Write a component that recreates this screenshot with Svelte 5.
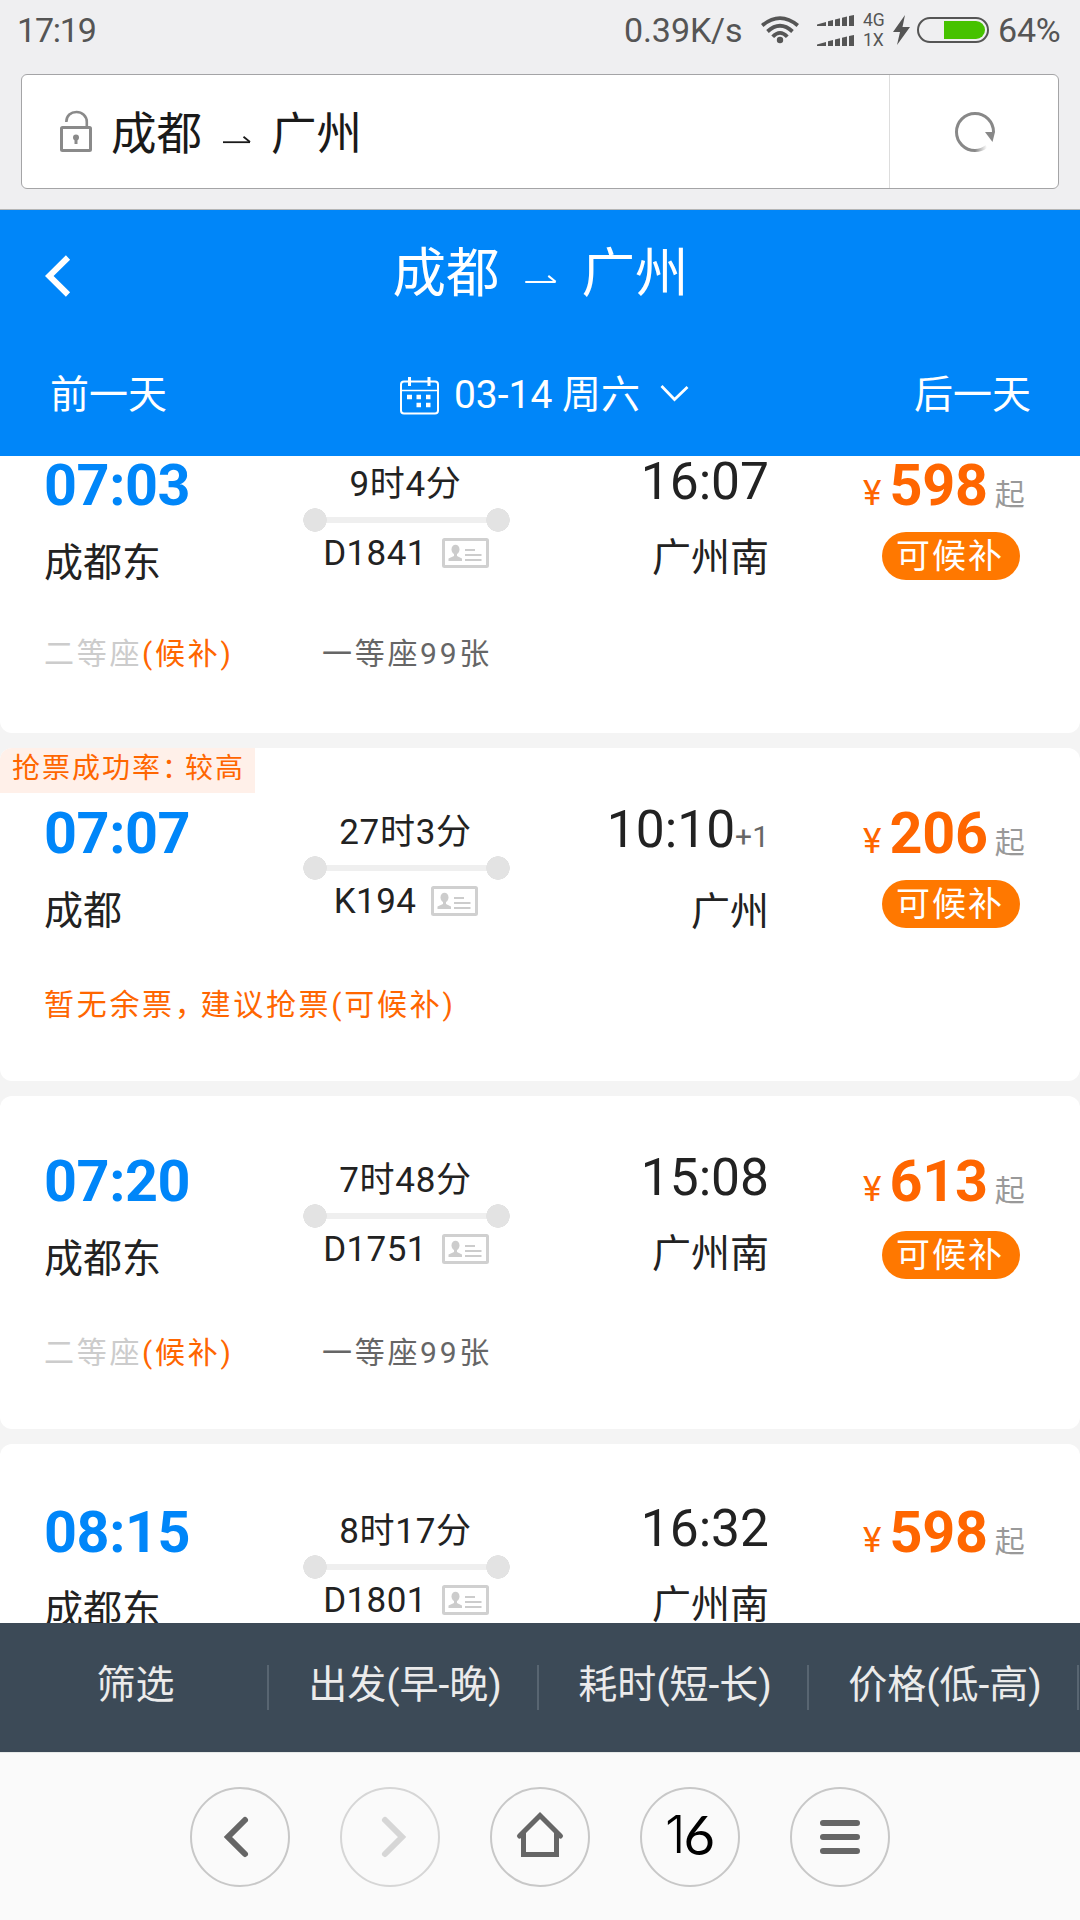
<script lang="ts">
  /**
   * Train ticket list for one day, inside the mobile browser chrome.
   */

  interface Train {
    depart: string
    from: string
    duration: string
    no: string
    arrive: string
    plusDay?: number
    to: string
    price: number
    waitlist: boolean
    rate?: string
    note?: boolean
    seats?: boolean
  }

  const trains: Train[] = [
    { depart: '07:03', from: '成都东', duration: '9时4分', no: 'D1841', arrive: '16:07', to: '广州南', price: 598, waitlist: true, seats: true },
    { depart: '07:07', from: '成都', duration: '27时3分', no: 'K194', arrive: '10:10', plusDay: 1, to: '广州', price: 206, waitlist: true, rate: '较高', note: true },
    { depart: '07:20', from: '成都东', duration: '7时48分', no: 'D1751', arrive: '15:08', to: '广州南', price: 613, waitlist: true, seats: true },
    { depart: '08:15', from: '成都东', duration: '8时17分', no: 'D1801', arrive: '16:32', to: '广州南', price: 598, waitlist: false },
  ]

  const filters = ['筛选', '出发(早-晚)', '耗时(短-长)', '价格(低-高)']
</script>

{#snippet harpoon()}
  <svg class="harpoon" viewBox="0 0 28 8" fill="none" stroke="currentColor" stroke-width="1.8">
    <path d="M0 6.2H27" />
    <path d="M20.5 0.8L27 6" />
  </svg>
{/snippet}

{#snippet signal()}
  <svg width="37" height="11" viewBox="0 0 37 11" fill="#555">
    <path d="M0 11V9.6L9 7V11ZM11 11V6.3L16 5V11ZM18 11V4.6L23 3.2V11ZM25 11V2.8L30 1.5V11ZM32 11V1L37 0V11Z" />
  </svg>
{/snippet}

<div class="screen">
  <div class="status">
    <span class="clock">17:19</span>
    <span class="speed">0.39K/s</span>
    <svg class="wifi" width="38" height="28" viewBox="0 0 38 28" fill="none" stroke="#555" stroke-width="3.8">
      <path d="M1.2 9.5Q19 -5.2 36.8 9.5" />
      <path d="M6.5 15.5Q19 4 31.5 15.5" />
      <path d="M11.7 20.8Q19 13 26.3 20.8" />
      <circle cx="19" cy="24" r="3.2" fill="#555" stroke="none" />
    </svg>
    <span class="signals">
      {@render signal()}
      {@render signal()}
    </span>
    <span class="modes"><span>4G</span><span>1X</span></span>
    <svg class="bolt" width="17" height="30" viewBox="0 0 17 30" fill="#555">
      <path d="M12 0L0 17H7L4 30L17 12H9.5Z" />
    </svg>
    <span class="battery"><i></i></span>
    <span class="percent">64%</span>
  </div>

  <div class="address">
    <div class="field">
      <svg width="32" height="42" viewBox="0 0 32 42" fill="none" stroke="#8a8a8a" stroke-width="3">
        <rect x="1.5" y="17.5" width="29" height="23" rx="1" />
        <path d="M6.3 12C6.3 5.5 11 2 16.5 2S26.8 6 26.8 12V17" stroke-width="2.6" />
        <circle cx="16" cy="27.5" r="3" fill="#8a8a8a" stroke="none" />
        <path d="M16 28V34" />
      </svg>
      <span class="place">成都{@render harpoon()}广州</span>
    </div>
    <div class="reload">
      <svg width="42" height="42" viewBox="0 0 42 42" fill="none">
        <defs>
          <linearGradient id="fade" x1="21" y1="0" x2="33" y2="0" gradientUnits="userSpaceOnUse">
            <stop offset="0" stop-color="#888" />
            <stop offset="1" stop-color="#888" stop-opacity="0" />
          </linearGradient>
        </defs>
        <path d="M39.5 21A18.5 18.5 0 1 0 21 39.5" stroke="#888" stroke-width="3" />
        <path d="M21 39.5A18.5 18.5 0 0 0 32.5 35.5" stroke="url(#fade)" stroke-width="3" />
        <path d="M31 21H41L38.5 31Z" fill="#888" />
      </svg>
    </div>
  </div>

  <header>
    <div class="title">
      <svg width="26" height="42" viewBox="0 0 26 42" fill="none" stroke="#fff" stroke-width="6">
        <path d="M23 2.5L4.2 21L23 39.5" />
      </svg>
      <h1>成都{@render harpoon()}广州</h1>
    </div>
    <div class="days">
      <span>前一天</span>
      <span class="date">
        <svg class="calendar" width="39" height="38" viewBox="0 0 39 38" fill="none" stroke="#fff" stroke-width="2">
          <rect x="1" y="4.5" width="37" height="32" rx="3" />
          <path d="M1 13.5H38" stroke-width="1.5" />
          <path d="M9.5 0V9M29 0V9" stroke-width="3" />
          <path d="M7 20H12M16.5 20H21M26 20H30.5M16.5 28H21M26 28H30.5" stroke-width="4.6" />
        </svg>
        <span>03-14 周六</span>
        <svg class="down" width="29" height="19" viewBox="0 0 29 19" fill="none" stroke="#fff" stroke-width="2.8">
          <path d="M1.5 2L14.5 15.5L27.5 3" />
        </svg>
      </span>
      <span>后一天</span>
    </div>
  </header>

  <main>
    <div class="list">
      {#each trains as train}
        <section class="card">
          {#if train.rate}
            <span class="rate">抢票成功率<span class="colon">：</span>{train.rate}</span>
          {/if}
          <div class="info">
            <div class="from">
              <strong>{train.depart}</strong>
              <span class="station">{train.from}</span>
            </div>
            <div class="trip">
              <span class="duration">{train.duration}</span>
              <span class="track"></span>
              <span class="no">
                {train.no}
                <svg width="47" height="30" viewBox="0 0 47 30" fill="#ccc">
                  <rect x="1.5" y="1.5" width="44" height="27" rx="1" fill="none" stroke="#d0d0d0" stroke-width="3" />
                  <ellipse cx="13.5" cy="11.5" rx="4" ry="4.8" />
                  <path d="M12 14H15V18L20 20.5V23H6.5V20.5L12 18Z" />
                  <path d="M23 11H33V13H23ZM23 16H39.5V18H23ZM23 21H39.5V23H23Z" />
                </svg>
              </span>
            </div>
            <div class="to" class:overnight={train.plusDay}>
              <span class="time">{train.arrive}{#if train.plusDay}<sub>+{train.plusDay}</sub>{/if}</span>
              <span class="station">{train.to}</span>
            </div>
            <div class="fare">
              <span class="price"><i>¥</i><strong>{train.price}</strong><em>起</em></span>
              {#if train.waitlist}
                <span class="badge">可候补</span>
              {/if}
            </div>
          </div>
          <div class="seats">
            {#if train.note}
              <span class="wait">暂无余票<span class="comma">，</span>建议抢票(可候补)</span>
            {:else if train.seats}
              <span class="seat"><span class="gone">二等座</span><span class="wait">(候补)</span></span>
              <span>一等座99张</span>
            {/if}
          </div>
        </section>
      {/each}
    </div>
  </main>

  <div class="filters">
    {#each filters as filter}
      <span>{filter}</span>
    {/each}
  </div>

  <nav>
    <span class="round">
      <svg width="60" height="60" viewBox="-30 -30 60 60"><path d="M5 -17L-12 0L5 17" /></svg>
    </span>
    <span class="round off">
      <svg width="60" height="60" viewBox="-30 -30 60 60"><path d="M-5 -17L12 0L-5 17" /></svg>
    </span>
    <span class="round">
      <svg width="60" height="60" viewBox="-30 -30 60 60">
        <path class="house" d="M-20.5 -1L0 -21.5L20.5 -1M-16.5 -4V17.5H16.5V-4" />
      </svg>
    </span>
    <span class="round tabs"><b>1</b>6</span>
    <span class="round">
      <svg width="60" height="60" viewBox="-30 -30 60 60"><path d="M-17 -14H17M-17 0H17M-17 14H17" /></svg>
    </span>
  </nav>
</div>

<style>
  :global(body) { margin: 0; background: #fafafa; }
  .screen {
    width: 1080px; height: 1920px; overflow: hidden;
    display: flex; flex-direction: column;
    font-family: Roboto, 'Noto Sans CJK SC', sans-serif;
    color: #222; background: #efeff1;
  }
  svg { display: block; flex: none; }
  strong { font-weight: 700; }
  i, em { font-style: normal; }

  .status {
    height: 60px; flex: none; box-sizing: border-box;
    padding: 0 16px 0 17px;
    display: flex; align-items: center;
    font-size: 34px; line-height: 60px; color: #555;
  }
  .clock { flex: 1; letter-spacing: -1.2px; }
  .speed { width: 120px; margin-right: 17px; white-space: nowrap; letter-spacing: -0.1px; }
  .signals { margin-left: 18px; display: flex; flex-direction: column; gap: 9px; }
  .modes {
    width: 24px; margin: 0 6px 0 9px;
    display: flex; flex-direction: column;
    font-size: 17.5px; line-height: 20px;
  }
  .battery {
    width: 72px; height: 26px; box-sizing: border-box; margin: 0 9px 0 7px;
    border: 2px solid #555; border-radius: 13px; padding: 2px;
    display: flex; justify-content: flex-end;
  }
  .battery i { width: 41px; background: #46c200; border-radius: 0 9px 9px 0; }
  .percent { width: 66px; letter-spacing: -0.2px; }

  .address {
    height: 115px; flex: none; box-sizing: border-box;
    margin: 14px 21px 0; border: 1px solid #a4a4a6; border-radius: 6px;
    display: flex; background: #fff;
  }
  .field { flex: 1; padding: 0 0 1px 38px; display: flex; align-items: center; gap: 19px; }
  .place {
    display: flex; align-items: center; padding-top: 7px;
    font-size: 45.5px; line-height: 50px; color: #1a1a1a;
  }
  .harpoon { width: 28px; height: 8px; margin: 10px 20px 0 21px; }
  .reload {
    width: 168px; border-left: 1px solid #ddd;
    display: flex; align-items: center; justify-content: center;
  }
  .reload svg { margin-left: 1px; }

  header {
    height: 247px; flex: none; box-sizing: border-box; margin-top: 20px;
    border-top: 1px solid #b5b5b5; background: #0086f9; color: #fff;
  }
  .title { height: 126px; display: flex; align-items: center; padding: 6px 0 0 45px; box-sizing: border-box; }
  h1 {
    flex: 1; margin: 0; padding: 0 70px 5px 0;
    display: flex; align-items: center; justify-content: center;
    font-size: 53.5px; font-weight: 400; line-height: 60px;
  }
  h1 .harpoon { width: 32px; height: 9px; margin: 12px 25px 0; }
  .days {
    padding: 33px 49px 0 50px; display: flex; align-items: center; justify-content: space-between;
    font-size: 39px; line-height: 52px;
  }
  .date { display: flex; align-items: center; gap: 15px; margin-left: 8px; }
  .calendar { margin-top: 2px; }
  .down { margin: 0 0 3px 5px; }

  main { height: 1167px; flex: none; overflow: hidden; background: #f4f4f4; }
  .list { margin-top: -56px; display: flex; flex-direction: column; gap: 15px; }
  .card {
    height: 333px; box-sizing: border-box; padding-top: 60px; overflow: hidden;
    position: relative; border-radius: 12px; background: #fff;
  }
  .card:last-child { padding-top: 63px; }
  .rate {
    position: absolute; top: 0; left: 0;
    width: 255px; height: 45px; box-sizing: border-box; padding-left: 12px;
    font-size: 28px; line-height: 42px; letter-spacing: 2px; white-space: nowrap;
    color: #f60; background: #fff0e9;
  }
  .colon { letter-spacing: -5px; }
  .comma { letter-spacing: -4.3px; }
  .info { height: 130px; display: flex; }
  .info > div { display: flex; flex-direction: column; }
  .from { width: 303px; padding-left: 44px; box-sizing: border-box; }
  .from strong { font-size: 57.5px; line-height: 51px; letter-spacing: -0.4px; color: #0086f9; }
  .from .station { margin-top: 26px; }
  .station { font-size: 39px; line-height: 52px; }
  .trip { width: 207px; align-items: center; }
  .duration { font-size: 35px; line-height: 50px; height: 48px; letter-spacing: 0.7px; margin-right: 2px; }
  .track {
    width: 207px; height: 24px; box-sizing: border-box;
    background:
      radial-gradient(circle closest-side, #e3e3e3 96%, transparent) left / 24px 24px no-repeat,
      radial-gradient(circle closest-side, #e3e3e3 96%, transparent) right / 24px 24px no-repeat,
      linear-gradient(#efefef, #efefef) center / 184px 6px no-repeat;
  }
  .no {
    display: flex; align-items: center; gap: 15px; height: 41px; margin-right: 1px;
    font-size: 35px; line-height: 41px; letter-spacing: 0.4px; padding-top: 1px;
  }
  .no svg { margin-bottom: 2px; }
  .to { width: 259px; align-items: flex-end; }
  .time { font-size: 51.5px; line-height: 44px; height: 42px; white-space: nowrap; }
  .time sub { font-size: 30px; line-height: 30px; vertical-align: baseline; color: #666; }
  .to .station { margin-top: 30px; }
  .overnight .station { margin-top: 36px; }
  .fare { flex: 1; padding-left: 93px; align-items: flex-start; }
  .price { display: flex; align-items: baseline; line-height: 51px; color: #f60; margin-left: 1px; }
  .price i { font-size: 35px; line-height: 35px; }
  .price strong { font-size: 57.5px; letter-spacing: -0.2px; margin: 0 7px 0 8px; }
  .price em { font-size: 30px; line-height: 28px; color: #999; }
  .badge {
    width: 138px; height: 48px; box-sizing: border-box; margin: 21px 0 0 20px; padding-left: 14px;
    border-radius: 24px; background: #ff7800; color: #fff;
    font-size: 34px; line-height: 48px; letter-spacing: 2px; white-space: nowrap;
  }
  .card:nth-child(3) .badge { margin-top: 24px; }
  .seats {
    margin-top: 47px; padding-left: 44px; display: flex;
    font-size: 30px; line-height: 40px; letter-spacing: 2.7px; color: #666;
  }
  .card:first-child .seats { margin-top: 44px; }
  .seat { width: 278px; }
  .gone { color: #ccc; }
  .wait { color: #f60; }

  .filters { height: 129px; flex: none; display: flex; align-items: center; background: #3c4a57; }
  .filters span {
    width: 270px; height: 45px; flex: none; box-sizing: border-box; border-right: 2px solid #586571;
    font-size: 39px; line-height: 36px; text-align: center; color: #ebebeb;
    padding: 2px 0 0 4px;
  }
  .filters span:first-child { width: 269px; }

  nav {
    flex: 1; display: flex; justify-content: center; align-items: center; gap: 50px;
    padding-top: 1px; border-top: 1px solid #e6e9e8; background: #fafafa;
  }
  .round {
    width: 100px; height: 100px; box-sizing: border-box;
    border: 2px solid #c8c8c8; border-radius: 50%;
    display: flex; align-items: center; justify-content: center;
  }
  .round path { fill: none; stroke: #666; stroke-width: 6; stroke-linecap: round; }
  .round .house { stroke-width: 5; }
  .off { border-color: #d6d6d6; }
  .off path { stroke: #d6d6d6; }
  .tabs { font-family: Lato, sans-serif; font-size: 54px; line-height: 92px; padding-bottom: 4px; color: #000; }
  .tabs b { font-family: Inter, sans-serif; font-size: 52px; font-weight: 300; letter-spacing: -2px; }
</style>
